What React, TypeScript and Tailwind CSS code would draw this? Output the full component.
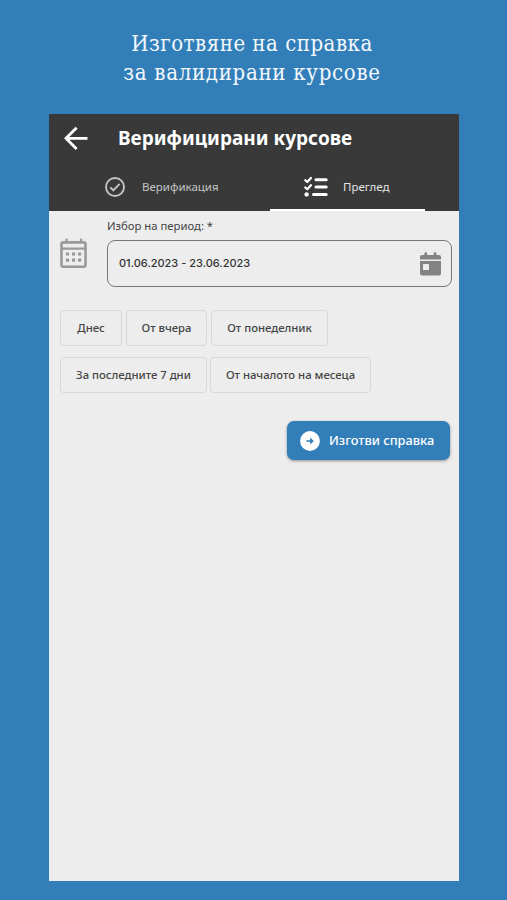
import type { ReactNode } from "react";

function BackIcon() {
  return (
    <svg width="24" height="24" viewBox="0 0 24 24" fill="none" stroke="#fff" strokeWidth="2.8">
      <path d="M23.5 11.3H2.2M12.6 .7 2 11.3l10.6 10.6" />
    </svg>
  );
}

function CheckIcon() {
  return (
    <svg width="20" height="20" viewBox="0 0 20 20" fill="none" stroke="#c4c4c4" strokeWidth="1.9">
      <circle cx="10" cy="10" r="9" />
      <path d="m5.3 10.4 3 2.9 6.3-6.4" />
    </svg>
  );
}

function TasksIcon() {
  return (
    <svg width="25" height="22" viewBox="0 0 25 22" fill="none" stroke="#fff" strokeLinecap="round">
      <path d="M12 3.7h10.2M12 11h10.2M9.5 18.4h12.7" strokeWidth="3" />
      <path d="m1.3 4.2 2 1.8 3.6-4.1M1.3 11.5l2 1.8 3.6-4.1" strokeWidth="2.2" strokeLinejoin="round" />
      <circle cx="2.6" cy="18.4" r="2.2" fill="#fff" stroke="none" />
    </svg>
  );
}

function CalendarIcon() {
  return (
    <svg width="28" height="31" viewBox="0 0 28 31" fill="none" stroke="#999">
      <rect x="1.5" y="4.4" width="24" height="24.4" rx="2" strokeWidth="2.6" />
      <path d="M1.8 10.6h24M6.6 .8v4M21 .8v4" strokeWidth="2.4" />
      <path
        d="M5.9 16h3.2M12 16h3.2M18 16h3.2M5.9 22.2h3.2M12 22.2h3.2M18 22.2h3.2"
        strokeWidth="3.2"
      />
    </svg>
  );
}

function CalendarDayIcon() {
  return (
    <svg width="21" height="24" viewBox="0 0 21 24" fill="#838383">
      <path d="M2 3h2.4V1.2a1 1 0 0 1 1-.9h.7a1 1 0 0 1 1 .9V3h6.6V1.2a1 1 0 0 1 1-.9h.7a1 1 0 0 1 1 .9V3H19a2 2 0 0 1 2 2v2.4H0V5a2 2 0 0 1 2-2Z" />
      <path
        fillRule="evenodd"
        d="M0 9h21v12.6a2 2 0 0 1-2 2H2a2 2 0 0 1-2-2V9Zm3.6 3a.6.6 0 0 0-.6.6v4.8c0 .4.3.6.6.6h4.8c.4 0 .6-.2.6-.6v-4.8a.6.6 0 0 0-.6-.6H3.6Z"
      />
    </svg>
  );
}

function ArrowCircleIcon() {
  return (
    <svg width="20" height="20" viewBox="0 0 20 20">
      <circle cx="10" cy="10" r="9.9" fill="#fff" />
      <path d="M6.4 9.2h3.8V6.6l3.6 3.4-3.6 3.4v-2.6H6.4Z" fill="#2f7cb8" />
    </svg>
  );
}

interface PeriodButtonProps {
  className: string;
  children: ReactNode;
}

function PeriodButton({ className, children }: PeriodButtonProps) {
  return (
    <button
      className={`h-9 shrink-0 rounded-[4px] border border-[#d8d8d8] text-center text-[11.3px] font-medium whitespace-nowrap text-[#444] ${className}`}
    >
      {children}
    </button>
  );
}

export default function App() {
  return (
    <div className="flex h-[900px] w-[507px] flex-col overflow-hidden bg-[#317eb9] font-['Noto_Sans',sans-serif]">
      <h1 className="h-[114px] shrink-0 pt-[29px] pr-[3px] text-center font-['DejaVu_Serif_Condensed','DejaVu_Serif',serif] text-[22px] leading-[29px] text-[#f4f8fc]">
        <span className="tracking-[0.5px]">Изготвяне на справка</span>
        <br />
        <span className="tracking-[0.7px]">за валидирани курсове</span>
      </h1>

      <main className="ml-[49px] flex h-[767px] w-[410px] flex-col bg-[#ededed]">
        <header className="flex h-[97px] shrink-0 flex-col bg-[#393939]">
          <div className="flex h-[49px] items-center pl-[15px]">
            <BackIcon />
            <h2 className="ml-[30px] text-[19px] font-bold whitespace-nowrap text-white">
              Верифицирани курсове
            </h2>
          </div>
          <nav className="flex h-12 pl-[34px]">
            <div className="flex w-[187px] items-center pl-[22px] text-[11.5px] text-[#c4c4c4]">
              <CheckIcon />
              <span className="ml-[17px]">Верификация</span>
            </div>
            <div className="flex w-[155px] items-center border-b-2 border-white pt-0.5 pl-[34px] text-[11.5px] text-[#e4e4e4]">
              <TasksIcon />
              <span className="ml-[14px]">Преглед</span>
            </div>
          </nav>
        </header>

        <section className="flex h-[76px] pl-[11px]">
          <div className="w-[47px] pt-[27px]">
            <CalendarIcon />
          </div>
          <div>
            <p className="h-[29px] pt-[6px] text-[11.3px] leading-[18px] text-[#444]">
              Избор на период: *
            </p>
            <div className="flex h-[47px] w-[345px] items-center justify-between rounded-[8px] border border-[#777] pr-[10px] pl-[11px] font-['Inter',sans-serif] text-[11px] font-medium text-[#333]">
              <span>01.06.2023 - 23.06.2023</span>
              <CalendarDayIcon />
            </div>
          </div>
        </section>

        <div className="mt-[23px] flex flex-col gap-[11px] pl-[11px]">
          <div className="flex gap-1">
            <PeriodButton className="w-[62px]">Днес</PeriodButton>
            <PeriodButton className="w-[81px]">От вчера</PeriodButton>
            <PeriodButton className="w-[117px]">От понеделник</PeriodButton>
          </div>
          <div className="flex gap-[3px]">
            <PeriodButton className="w-[147px]">За последните 7 дни</PeriodButton>
            <PeriodButton className="w-[161px]">От началото на месеца</PeriodButton>
          </div>
        </div>

        <button className="mt-[28px] mr-[9px] flex h-[39px] w-[163px] items-center self-end rounded-[7px] bg-[#317eb9] pl-[13px] text-[12.8px] font-medium whitespace-nowrap text-white shadow-[0_1px_3px_rgba(0,0,0,0.4)]">
          <ArrowCircleIcon />
          <span className="ml-[9px]">Изготви справка</span>
        </button>
      </main>
    </div>
  );
}
